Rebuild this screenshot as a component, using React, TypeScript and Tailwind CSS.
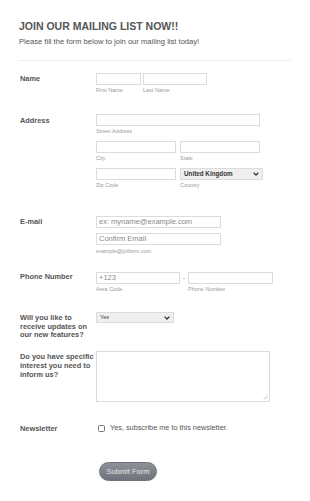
import React from "react";

const Input = ({ w, text, className = "" }: { w: string; text?: string; className?: string }) => (
  <div className={`h-[12px] border border-[#dcdcdc] bg-white px-[2px] text-[7.5px] leading-[10px] text-[#8a8a8a] ${w} ${className}`}>
    {text}
  </div>
);

const Sub = ({ children, className = "" }: { children: React.ReactNode; className?: string }) => (
  <div className={`mt-[2px] text-[5.5px] leading-[7px] text-[#9a9a9a] ${className}`}>{children}</div>
);

const Chevron = () => (
  <svg width="6" height="4" viewBox="0 0 6 4" className="mr-[3px]">
    <path d="M0.6 0.6 L3 3 L5.4 0.6" stroke="#333" strokeWidth="1.3" fill="none" />
  </svg>
);

const Row = ({
  label,
  children,
  className = "",
  labelClass = "",
}: {
  label: React.ReactNode;
  children: React.ReactNode;
  className?: string;
  labelClass?: string;
}) => (
  <div className={`flex pl-[20px] ${className}`}>
    <div className={`w-[76px] shrink-0 whitespace-nowrap text-[7.4px] font-bold leading-[8.7px] text-[#555] ${labelClass}`}>{label}</div>
    <div>{children}</div>
  </div>
);

export default function App() {
  return (
    <div className="w-[310px] h-[501px] bg-white" style={{ fontFamily: '"Liberation Sans", Arial, sans-serif' }}>
      <div className="px-[19px] pt-[20px]">
        <h1 className="text-[10.5px] font-bold leading-[12px] text-[#555]">JOIN OUR MAILING LIST NOW!!</h1>
        <p className="mt-[5px] text-[7.6px] leading-[9px] text-[#555]">Please fill the form below to join our mailing list today!</p>
      </div>
      <div className="mx-[18px] mr-[19px] mt-[14px] border-t border-[#f0f0f0]" />

      <Row label="Name" className="mt-[12px]" labelClass="pt-[2px]">
        <div className="flex gap-[2px]">
          <div>
            <Input w="w-[45px]" />
            <Sub>First Name</Sub>
          </div>
          <div>
            <Input w="w-[64px]" />
            <Sub>Last Name</Sub>
          </div>
        </div>
      </Row>

      <Row label="Address" className="mt-[20px]" labelClass="pt-[3px]">
        <Input w="w-[164px]" />
        <Sub>Street Address</Sub>
        <div className="mt-[6px] flex gap-[4px]">
          <div>
            <Input w="w-[80px]" />
            <Sub>City</Sub>
          </div>
          <div>
            <Input w="w-[80px]" />
            <Sub>State</Sub>
          </div>
        </div>
        <div className="mt-[6px] flex gap-[4px]">
          <div>
            <Input w="w-[80px]" />
            <Sub>Zip Code</Sub>
          </div>
          <div>
            <div className="flex h-[12px] w-[83px] items-center justify-between border border-[#dcdcdc] bg-[#efefef] pl-[3px] text-[6.3px] font-bold text-[#333]">
              United Kingdom
              <Chevron />
            </div>
            <Sub className="mt-[1px]">Country</Sub>
          </div>
        </div>
      </Row>

      <Row label="E-mail" className="mt-[27px]" labelClass="pt-[2px]">
        <Input w="w-[125px]" text="ex: myname@example.com" />
        <Input w="w-[125px]" text="Confirm Email" className="mt-[5px]" />
        <Sub className="mt-[3px]">example@jotform.com</Sub>
      </Row>

      <Row label="Phone Number" className="mt-[17px]" labelClass="pt-[1px]">
        <div className="flex items-start">
          <div>
            <Input w="w-[84px]" text="+123" />
            <Sub>Area Code</Sub>
          </div>
          <div className="w-[8px] text-center text-[7px] leading-[11px] text-[#999]">-</div>
          <div>
            <Input w="w-[85px]" />
            <Sub>Phone Number</Sub>
          </div>
        </div>
      </Row>

      <Row
        className="mt-[21px]"
        label={
          <>
            Will you like to
            <br />
            receive updates on
            <br />
            our new features?
          </>
        }
      >
        <div className="mt-[-2px] flex h-[11px] w-[78px] items-center justify-between border border-[#dcdcdc] bg-[#efefef] pl-[3px] text-[5.5px] text-[#333]">
          Yes
          <Chevron />
        </div>
      </Row>

      <Row
        className="mt-[13px]"
        label={
          <>
            Do you have specific
            <br />
            interest you need to
            <br />
            inform us?
          </>
        }
      >
        <div className="relative mt-[-2px] h-[51px] w-[174px] border border-[#dcdcdc] bg-white">
          <svg width="5" height="5" viewBox="0 0 5 5" className="absolute bottom-[1px] right-[1px]">
            <path d="M4.5 0.5 L0.5 4.5 M4.5 2.5 L2.5 4.5" stroke="#aaa" strokeWidth="0.6" />
          </svg>
        </div>
      </Row>

      <Row label="Newsletter" className="mt-[22px]" labelClass="pt-[1px]">
        <div className="flex items-start">
          <div className="ml-[2px] mt-[1px] h-[7px] w-[7px] rounded-[1.5px] border border-[#777] bg-white" />
          <div className="ml-[5px] mt-[-1px] text-[7.3px] leading-[9px] text-[#555]">Yes, subscribe me to this newsletter.</div>
        </div>
      </Row>

      <div className="pl-[99px] mt-[28px]">
        <div className="flex h-[19px] w-[58px] items-center justify-center rounded-full border border-[#6f7279] bg-gradient-to-b from-[#8e9198] to-[#70737b] text-[7.5px] text-[#e6e6e6]">
          Submit Form
        </div>
      </div>
    </div>
  );
}
